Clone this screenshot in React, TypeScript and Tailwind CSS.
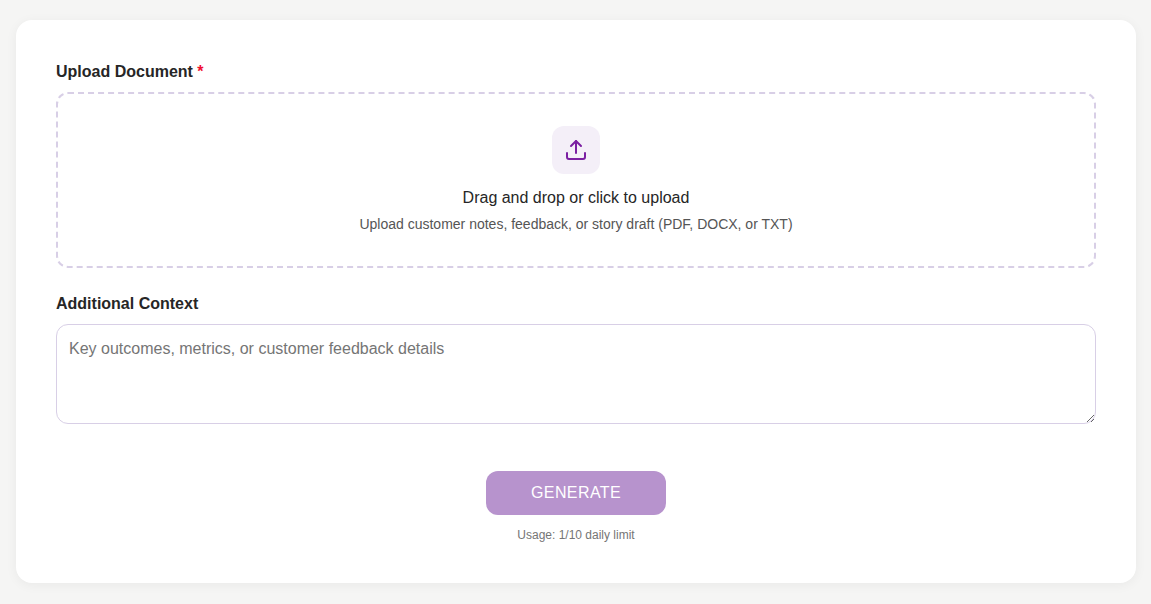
import { Upload } from 'lucide-react'

export default function App() {
  return (
    <div className="min-h-[604px] bg-[#f5f5f4] pt-5 pr-[15px] pb-5 pl-4 font-['Liberation_Sans',Arial,sans-serif]">
      <div className="rounded-2xl bg-white p-10 shadow-[0_2px_12px_rgba(0,0,0,0.05)]">
        <label className="mb-2 block text-base leading-6 font-bold text-[#262626]">
          Upload Document <span className="text-[#f01030]">*</span>
        </label>
        <div className="flex cursor-pointer flex-col items-center rounded-xl border-2 border-dashed border-[#d8cfe6] px-8 py-8">
          <div className="mb-3 flex h-12 w-12 items-center justify-center rounded-xl bg-[#f4eff8]">
            <Upload size={24} className="text-[#7b1fa2]" />
          </div>
          <p className="text-base leading-6 text-[#262626]">Drag and drop or click to upload</p>
          <p className="mt-1 text-sm leading-5 text-[#555555]">
            Upload customer notes, feedback, or story draft (PDF, DOCX, or TXT)
          </p>
        </div>

        <label className="mt-6 mb-2 block text-base leading-6 font-bold text-[#262626]">
          Additional Context
        </label>
        <textarea
          className="block h-[100px] w-full rounded-xl border border-[#d8cfe6] px-3 py-3 text-base leading-6 text-[#262626] outline-none placeholder:text-[#757575]"
          placeholder="Key outcomes, metrics, or customer feedback details"
        />

        <div className="mt-[47px] flex flex-col items-center">
          <button
            disabled
            className="h-11 w-[180px] rounded-xl bg-[#b793cd] text-base tracking-[0.4px] text-white"
          >
            GENERATE
          </button>
          <p className="mt-3 text-xs leading-4 text-[#757575]">Usage: 1/10 daily limit</p>
        </div>
      </div>
    </div>
  )
}
